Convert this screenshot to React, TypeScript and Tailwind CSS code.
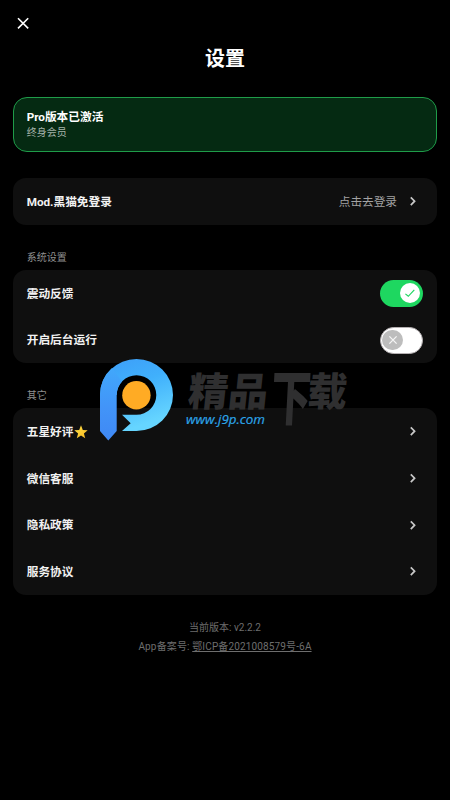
import React from 'react'
import clsx from 'clsx'

interface IRow {
  title: string
  hint?: string
  icon?: React.ReactNode
  children?: React.ReactNode
}

const OTHER_LINKS = ['微信客服', '隐私政策', '服务协议']

const ChevronIcon = () => (
  <svg width="8" height="12" viewBox="0 0 8 12" fill="none">
    <path d="M1.8 2.3L5.6 6.2L1.8 10.1" stroke="#c8c8c8" strokeWidth="1.7" />
  </svg>
)

const StarIcon = () => (
  <svg className="mb-[2px] ml-[0.5px]" width="14" height="14" viewBox="0 0 14 14">
    <defs>
      <linearGradient id="star" x1="0" y1="0" x2="1" y2="1">
        <stop offset="0" stopColor="#ffe14a" />
        <stop offset="1" stopColor="#f9b81f" />
      </linearGradient>
    </defs>
    <path
      d="M7 .3L8.8 4.9L13.7 5.2L9.9 8.4L11.2 13.3L7 10.6L2.8 13.3L4.1 8.4L.3 5.2L5.2 4.9Z"
      fill="url(#star)"
    />
  </svg>
)

const Row = ({ title, hint, icon, children }: IRow) => (
  <div className="flex h-[46.7px] items-center justify-between px-[13.7px]">
    <span className="flex items-center pt-[2.6px] text-[11.7px] font-bold text-[#f2f2f2]">
      {title}
      {icon}
    </span>
    {children ?? (
      <span className="flex items-center gap-3 pr-[6.3px] text-[11.67px] text-[#a3a3a3]">
        <span className="pt-[2px]">{hint}</span>
        <ChevronIcon />
      </span>
    )}
  </div>
)

const Toggle = ({ on }: { on: boolean }) => (
  <div
    className={clsx(
      'flex h-[27px] w-[43.5px] items-center rounded-full',
      on ? 'justify-end bg-[#1ed760] pr-[3px]' : 'mt-px border-[1.7px] border-[#b5b0b2] bg-white pl-[1.5px]'
    )}
  >
    <div
      className={clsx(
        'flex h-[20.5px] w-[20.5px] items-center justify-center rounded-full',
        on ? 'bg-white' : 'bg-[#bdbdbd]'
      )}
    >
      <svg width="12" height="12" viewBox="0 0 12 12" fill="none">
        {on
          ? <path d="M1.4 6.9L4.3 9.3L10.3 2.9" stroke="#1ed760" strokeWidth="1.2" />
          : <path d="M2.4 2.4L9.6 9.6M9.6 2.4L2.4 9.6" stroke="#f5f5f5" strokeWidth="1.3" />}
      </svg>
    </div>
  </div>
)

const Card = ({ children }: { children: React.ReactNode }) => (
  <div className="rounded-[13px] bg-[#0f0f0f]">{children}</div>
)

const SectionTitle = ({ text }: { text: string }) => (
  <h2 className="h-[13px] pl-[13.7px] text-[10px] leading-[13px] text-[#8f8f8f]">{text}</h2>
)

const Watermark = () => (
  <svg
    className="pointer-events-none absolute left-[96px] top-[325px]"
    width="270"
    height="150"
    viewBox="96 325 270 150"
  >
    <defs>
      <linearGradient id="loop" x1="0" y1="0" x2="0.35" y2="1">
        <stop offset="0" stopColor="#3d9df8" />
        <stop offset="0.45" stopColor="#40b0fc" />
        <stop offset="1" stopColor="#66d5ff" />
      </linearGradient>
      <linearGradient id="stem" x1="0" y1="0" x2="0" y2="1">
        <stop offset="0" stopColor="#41a8fb" />
        <stop offset="0.55" stopColor="#4294f8" />
        <stop offset="1" stopColor="#3f88f5" />
      </linearGradient>
    </defs>
    <path
      d="M122 414.8H136.5A19.8 19.8 0 1 0 116.7 395H100A36.5 36 0 1 1 136.5 431H122L130.7 423.2Z"
      fill="url(#loop)"
    />
    <path d="M100 395A36.5 36 0 0 1 112 368L122 381.5A19.8 19.8 0 0 0 116.7 395V431L108.3 440.5L100 431Z" fill="url(#stem)" />
    <circle cx="136.4" cy="395.2" r="14.2" fill="#ffab24" />
    <g
      fill="#2f2f30"
      fontWeight="900"
      fontFamily="'Noto Sans CJK SC', sans-serif"
    >
      <text transform="translate(187 406) skewX(-6)" fontSize="39.5" textLength="80" lengthAdjust="spacingAndGlyphs">精品</text>
      <text transform="translate(270 419.8) skewX(-3) scale(1 1.5)" fontSize="40">下</text>
      <text transform="translate(306.5 406) skewX(-5)" fontSize="39.5">载</text>
    </g>
    <text
      x="186"
      y="423.5"
      fontSize="13.5"
      fontStyle="italic"
      fontWeight="500"
      fill="#2ca5e8"
      stroke="#2ca5e8"
      strokeWidth="0.2"
      fontFamily="'Open Sans', sans-serif"
      textLength="79"
      lengthAdjust="spacingAndGlyphs"
    >
      www.j9p.com
    </text>
  </svg>
)

const App = () => {
  return (
    <main className="relative h-[800px] w-[450px] overflow-hidden bg-black px-[13px] font-[Roboto,'Noto_Sans_CJK_SC',sans-serif]">
      <header className="flex h-[97px] flex-col pt-[17px]">
        <button className="ml-[4px] w-3">
          <svg width="12" height="12" viewBox="0 0 12 12" fill="none">
            <path d="M1 1.2L11.2 11.4M11.2 1.2L1 11.4" stroke="white" strokeWidth="1.6" />
          </svg>
        </button>
        <h1 className="mt-[15px] text-center text-[20px] font-bold leading-[30px] text-white">设置</h1>
      </header>

      <section className="mb-[26px] h-[55px] rounded-[14px] border border-[#1f9c49] bg-[#052a12] pl-[12.7px] pt-[12px]">
        <p className="text-[11.7px] font-bold leading-[15px] text-white">Pro版本已激活</p>
        <p className="text-[10px] leading-[15px] text-[#a6b3aa]">终身会员</p>
      </section>

      <Card>
        <Row title="Mod.黑猫免登录" hint="点击去登录" />
      </Card>

      <div className="mt-[26px]">
        <SectionTitle text="系统设置" />
        <div className="mt-[6px]">
          <Card>
            <Row title="震动反馈"><Toggle on /></Row>
            <Row title="开启后台运行"><Toggle on={false} /></Row>
          </Card>
        </div>
      </div>

      <div className="mt-[26px]">
        <SectionTitle text="其它" />
        <div className="mt-[6px]">
          <Card>
            <Row title="五星好评" icon={<StarIcon />} />
            {OTHER_LINKS.map((title) => <Row key={title} title={title} />)}
          </Card>
        </div>
      </div>

      <footer className="mt-[23px] text-center text-[10px] leading-[19px] text-[#6e6e6e]">
        <p>当前版本: v2.2.2</p>
        <p className="tracking-[0.14px]">App备案号: <a className="underline">鄂ICP备2021008579号-6A</a></p>
      </footer>

      <Watermark />
    </main>
  )
}

export default App
